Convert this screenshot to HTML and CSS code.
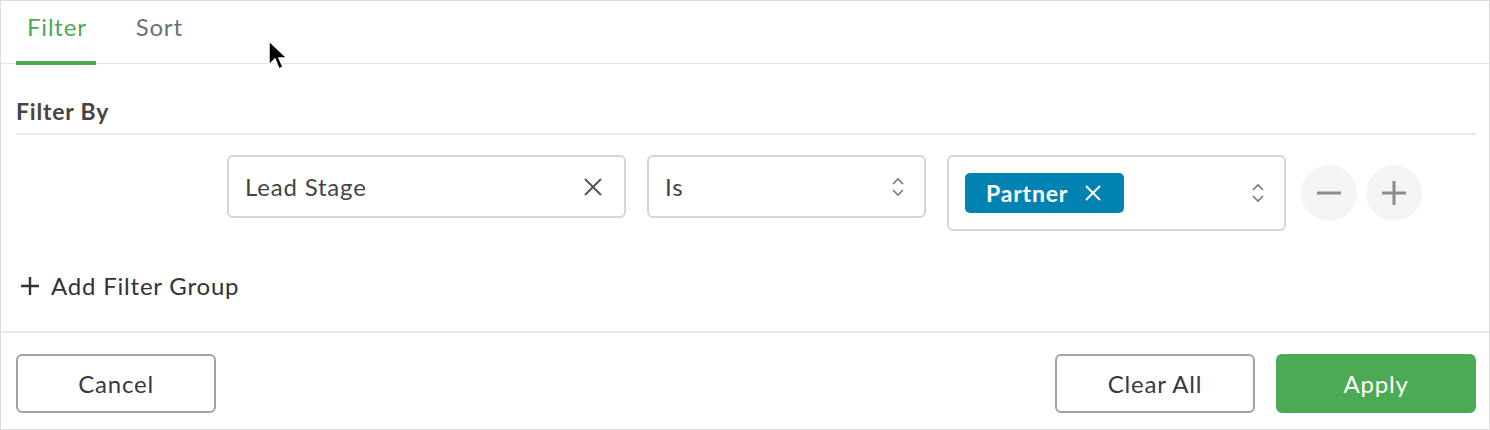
FILE: index.html
```html
<!DOCTYPE html>
<html lang="en">
  <head>
    <meta charset="UTF-8" />
    <meta name="viewport" content="width=device-width, initial-scale=1.0" />
    <title>Filter</title>
    <link rel="stylesheet" href="styles.css">
  </head>

  <body>
    <div class="panel">
      <nav class="tabs">
        <span class="tab active">Filter</span>
        <span class="tab">Sort</span>
      </nav>

      <section class="body">
        <h2 class="section-title">Filter By</h2>

        <div class="filter-row">
          <div class="field field-attr">
            <span>Lead Stage</span>
            <svg class="clear" width="22" height="22" viewBox="0 0 22 22">
              <path d="M3 3 L19 19 M19 3 L3 19" stroke="#555" stroke-width="2" fill="none" />
            </svg>
          </div>

          <div class="field field-op">
            <span>Is</span>
            <svg class="updown" width="14" height="22" viewBox="0 0 14 22">
              <path d="M2 8 L7 3 L12 8 M2 14 L7 19 L12 14" stroke="#777" stroke-width="1.6" fill="none" />
            </svg>
          </div>

          <div class="field field-value">
            <span class="tag">
              Partner
              <svg width="18" height="18" viewBox="0 0 18 18">
                <path d="M2 2 L16 16 M16 2 L2 16" stroke="#fff" stroke-width="2" fill="none" />
              </svg>
            </span>
            <svg class="updown" width="14" height="22" viewBox="0 0 14 22">
              <path d="M2 8 L7 3 L12 8 M2 14 L7 19 L12 14" stroke="#777" stroke-width="1.6" fill="none" />
            </svg>
          </div>

          <button class="round-btn" type="button">
            <svg width="26" height="26" viewBox="0 0 26 26">
              <path d="M1 13 H25" stroke="#8a8a8a" stroke-width="3" fill="none" />
            </svg>
          </button>
          <button class="round-btn" type="button">
            <svg width="26" height="26" viewBox="0 0 26 26">
              <path d="M1 13 H25 M13 1 V25" stroke="#8a8a8a" stroke-width="3" fill="none" />
            </svg>
          </button>
        </div>

        <a class="add-group" href="#">
          <svg width="20" height="20" viewBox="0 0 20 20">
            <path d="M1 10 H19 M10 1 V19" stroke="#333" stroke-width="2.4" fill="none" />
          </svg>
          Add Filter Group
        </a>
      </section>

      <footer class="actions">
        <button class="btn" type="button">Cancel</button>
        <div class="actions-right">
          <button class="btn" type="button">Clear All</button>
          <button class="btn btn-primary" type="button">Apply</button>
        </div>
      </footer>

      <!-- mouse pointer -->
      <svg class="pointer" width="22" height="34" viewBox="0 0 22 34">
        <path d="M2 2 L2 26 L8 20 L12 30 L16 28 L12 19 L20 19 Z" fill="#000" stroke="#fff" stroke-width="1.5" />
      </svg>
    </div>
  </body>
</html>
```

FILE: styles.css
```css
* {
  box-sizing: border-box;
}

body {
  margin: 0;
  font-family: "Lato", "Open Sans", sans-serif;
  letter-spacing: 0.8px;
  color: #3d4350;
  background: #fff;
}

.panel {
  position: relative;
  width: 1490px;
  height: 430px;
  border: 1px solid #dcdcdc;
  display: flex;
  flex-direction: column;
}

/* tabs */
.tabs {
  display: flex;
  gap: 29px;
  padding: 0 15px;
  height: 63px;
  border-bottom: 1px solid #e2e4e6;
}

.tab {
  padding: 11px 9px 0 11px;
  font-size: 24px;
  color: #6b707a;
}

.tab.active {
  color: #4caa55;
  border-bottom: 4px solid #4caa55;
  margin-bottom: -2px;
}

/* filter body */
.body {
  flex: 1;
  padding: 0 13px 0 15px;
}

.section-title {
  margin: 33px 0 0;
  padding-bottom: 8px;
  font-size: 23px;
  font-weight: bold;
  color: #454545;
  border-bottom: 2px solid #e6e7e8;
}

.filter-row {
  display: flex;
  align-items: flex-start;
  padding: 20px 0 0 211px;
}

.field {
  display: flex;
  align-items: center;
  justify-content: space-between;
  height: 63px;
  border: 2px solid #d3d6d9;
  border-radius: 6px;
  padding: 0 19px 0 16px;
  font-size: 24px;
  color: #444;
}

.field-attr {
  width: 399px;
  padding-right: 20px;
}

.field-op {
  width: 279px;
  margin-left: 21px;
}

.field-value {
  width: 339px;
  height: 76px;
  margin-left: 21px;
}

.tag {
  display: flex;
  align-items: center;
  gap: 16px;
  height: 40px;
  padding: 0 22px 0 21px;
  border-radius: 5px;
  background: #0083b3;
  color: #fff;
  font-weight: bold;
  font-size: 23px;
}

.round-btn {
  width: 56px;
  height: 56px;
  margin-top: 10px;
  margin-left: 15px;
  border: none;
  border-radius: 50%;
  background: #f4f4f4;
  display: flex;
  align-items: center;
  justify-content: center;
  padding: 0;
}

.round-btn + .round-btn {
  margin-left: 9px;
}

.add-group {
  display: inline-flex;
  align-items: center;
  gap: 11px;
  margin-top: 40px;
  padding-left: 4px;
  font-size: 24px;
  color: #333;
  text-decoration: none;
}

/* footer */
.actions {
  display: flex;
  justify-content: space-between;
  padding: 21px 13px 16px 15px;
  border-top: 2px solid #e4e5e6;
}

.actions-right {
  display: flex;
  gap: 21px;
}

.btn {
  width: 200px;
  height: 59px;
  border: 2px solid #9ea3aa;
  border-radius: 6px;
  background: #fff;
  font-family: inherit;
  font-size: 24px;
  letter-spacing: 0.8px;
  color: #333a45;
}

.btn-primary {
  border-color: #4caa55;
  background: #4caa55;
  color: #fff;
}

.pointer {
  position: absolute;
  left: 266px;
  top: 38px;
}
```
